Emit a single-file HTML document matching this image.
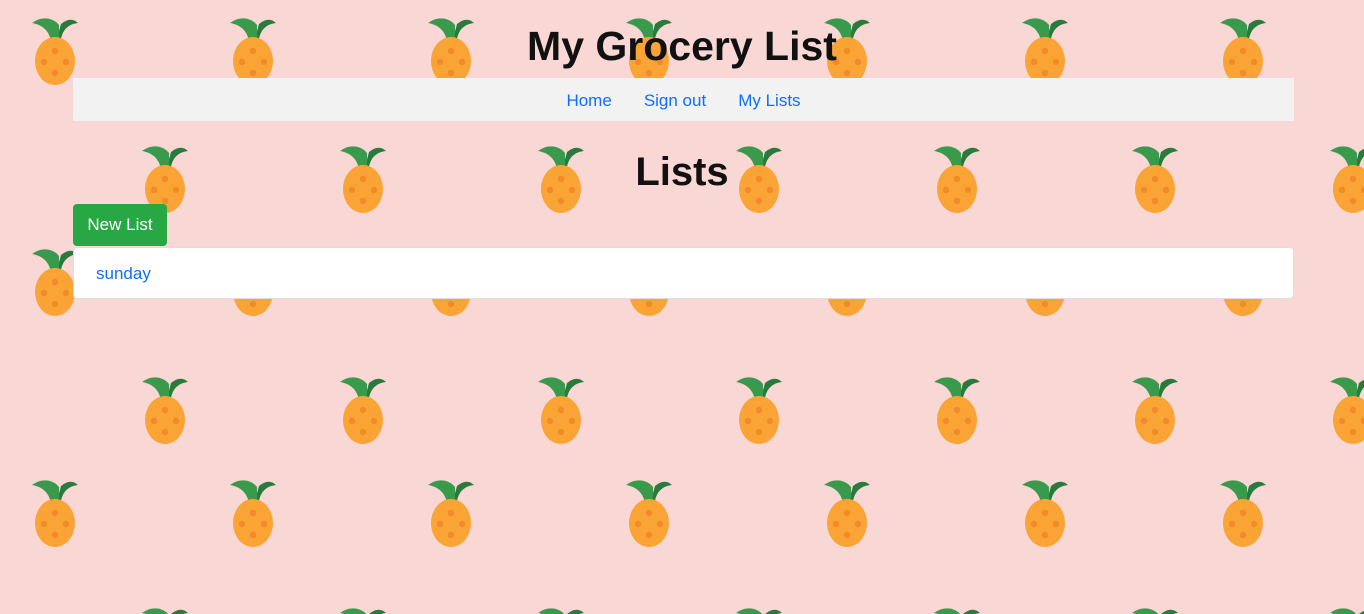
<!DOCTYPE html>
<html><head><style>
body{margin:0;width:1364px;height:614px;overflow:hidden;background:#f8d7d4;font-family:"Liberation Sans",sans-serif;position:relative}
svg.bg{position:absolute;left:0;top:0}
.c{position:absolute;left:73px;width:1221px}
h1{position:absolute;top:18px;left:0;width:1364px;text-align:center;margin:0;font-size:41px;font-weight:bold;line-height:56px;color:#111}
.nav{top:78px;height:43px;background:#f2f2f2;text-align:center;font-size:17px;line-height:45px}
.nav a{color:#0d6efd;text-decoration:none;margin:0 16px}
h2{position:absolute;top:146px;left:0;width:1364px;text-align:center;margin:0;font-size:40px;font-weight:bold;line-height:52px;color:#111}
.btn{position:absolute;left:73px;top:204px;width:94px;height:42px;background:#28a745;color:#fff;border-radius:4px;font-size:17px;line-height:42px;text-align:center}
.card{top:247px;height:52px;background:#fff;border-radius:4px;border:1px solid #e4dcdc;box-sizing:border-box}
.card a{position:absolute;left:22px;top:16px;color:#0d6efd;font-size:17px;text-decoration:none}
</style></head><body>
<svg class="bg" width="1364" height="614">
<defs>
<g id="p">
<path d="M6,7 C12,2 18,1 23,6 C14,7 8,12 6,22 L2,22 Z" fill="#2b7a3d"/>
<path d="M-23,6 C-14,-1 -2,0 4,8 L4,24 L-4,24 C-6,14 -12,8 -23,6 Z" fill="#3a9a4c"/>
<ellipse cx="0" cy="44" rx="20" ry="24" fill="#f9a434"/>
<circle cx="0" cy="34" r="3.2" fill="#f28a2a"/><circle cx="-11" cy="45" r="3.2" fill="#f28a2a"/><circle cx="11" cy="45" r="3.2" fill="#f28a2a"/><circle cx="0" cy="56" r="3.2" fill="#f28a2a"/>
</g>
<pattern id="pt" width="198" height="231" patternUnits="userSpaceOnUse">
<use href="#p" x="55" y="17"/><use href="#p" x="165" y="145"/><use href="#p" x="165" y="-86"/><use href="#p" x="-33" y="145"/>
</pattern>
</defs>
<rect width="1364" height="614" fill="url(#pt)"/>
</svg>
<h1>My Grocery List</h1>
<div class="c nav"><a>Home</a><a>Sign out</a><a>My Lists</a></div>
<h2>Lists</h2>
<div class="btn">New List</div>
<div class="c card"><a>sunday</a></div>
</body></html>
